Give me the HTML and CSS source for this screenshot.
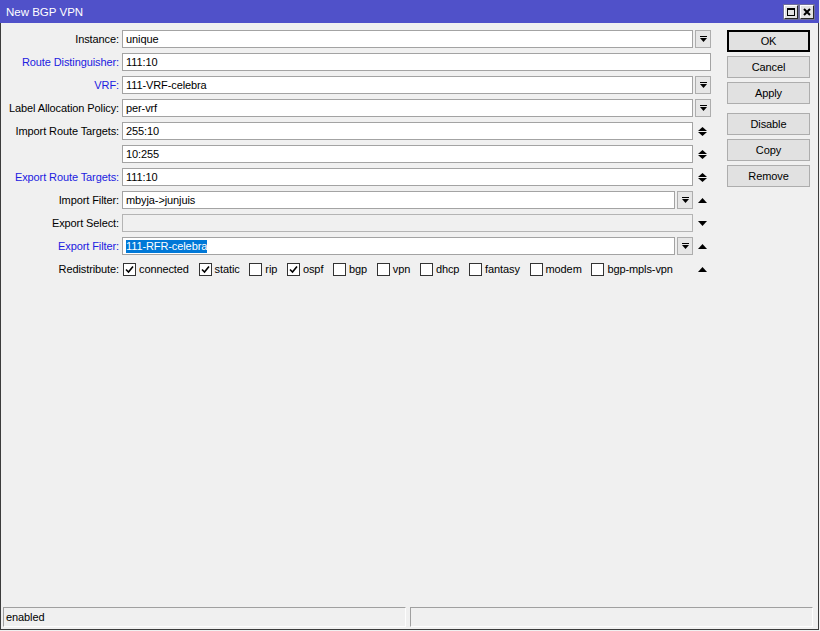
FILE: index.html
```html
<!DOCTYPE html>
<html>
<head>
<meta charset="utf-8">
<title>New BGP VPN</title>
<link rel="stylesheet" href="styles.css">
</head>
<body>
<div class="window">
  <div class="titlebar">
    <span class="title">New BGP VPN</span>
    <div class="tb-buttons">
      <span class="tb-btn"><svg width="8" height="8" viewBox="0 0 8 8"><rect x="0.5" y="0.5" width="7" height="7" fill="none" stroke="#000"/><rect x="0" y="0" width="8" height="2" fill="#000"/></svg></span>
      <span class="tb-btn"><svg width="8" height="8" viewBox="0 0 8 8"><path d="M1 1L7 7M7 1L1 7" stroke="#000" stroke-width="2"/></svg></span>
    </div>
  </div>
  <div class="content">
    <div class="form">
      <div class="row">
        <span class="lbl">Instance:</span>
        <div class="field">
          <span class="input">unique</span>
          <span class="dd"><svg width="7" height="6" viewBox="0 0 7 6"><rect x="0" y="0" width="7" height="1"/><path d="M0 2H7L3.5 6Z"/></svg></span>
        </div>
      </div>
      <div class="row">
        <span class="lbl blue">Route Distinguisher:</span>
        <div class="field">
          <span class="input">111:10</span>
        </div>
      </div>
      <div class="row">
        <span class="lbl blue">VRF:</span>
        <div class="field">
          <span class="input">111-VRF-celebra</span>
          <span class="dd"><svg width="7" height="6" viewBox="0 0 7 6"><rect x="0" y="0" width="7" height="1"/><path d="M0 2H7L3.5 6Z"/></svg></span>
        </div>
      </div>
      <div class="row">
        <span class="lbl">Label Allocation Policy:</span>
        <div class="field">
          <span class="input">per-vrf</span>
          <span class="dd"><svg width="7" height="6" viewBox="0 0 7 6"><rect x="0" y="0" width="7" height="1"/><path d="M0 2H7L3.5 6Z"/></svg></span>
        </div>
      </div>
      <div class="row">
        <span class="lbl">Import Route Targets:</span>
        <div class="field">
          <span class="input">255:10</span>
          <span class="arr"><svg width="9" height="9" viewBox="0 0 9 9"><path d="M4.5 0L9 4H0Z M0 5H9L4.5 9Z"/></svg></span>
        </div>
      </div>
      <div class="row">
        <span class="lbl"></span>
        <div class="field">
          <span class="input">10:255</span>
          <span class="arr"><svg width="9" height="9" viewBox="0 0 9 9"><path d="M4.5 0L9 4H0Z M0 5H9L4.5 9Z"/></svg></span>
        </div>
      </div>
      <div class="row">
        <span class="lbl blue">Export Route Targets:</span>
        <div class="field">
          <span class="input">111:10</span>
          <span class="arr"><svg width="9" height="9" viewBox="0 0 9 9"><path d="M4.5 0L9 4H0Z M0 5H9L4.5 9Z"/></svg></span>
        </div>
      </div>
      <div class="row">
        <span class="lbl">Import Filter:</span>
        <div class="field">
          <span class="input">mbyja-&gt;junjuis</span>
          <span class="dd"><svg width="7" height="6" viewBox="0 0 7 6"><rect x="0" y="0" width="7" height="1"/><path d="M0 2H7L3.5 6Z"/></svg></span>
          <span class="arr"><svg width="9" height="5" viewBox="0 0 9 5"><path d="M4.5 0L9 5H0Z"/></svg></span>
        </div>
      </div>
      <div class="row">
        <span class="lbl">Export Select:</span>
        <div class="field">
          <span class="input disabled"></span>
          <span class="arr"><svg width="9" height="5" viewBox="0 0 9 5"><path d="M0 0H9L4.5 5Z"/></svg></span>
        </div>
      </div>
      <div class="row">
        <span class="lbl blue">Export Filter:</span>
        <div class="field">
          <span class="input"><span class="sel">111-RFR-celebra</span></span>
          <span class="dd"><svg width="7" height="6" viewBox="0 0 7 6"><rect x="0" y="0" width="7" height="1"/><path d="M0 2H7L3.5 6Z"/></svg></span>
          <span class="arr"><svg width="9" height="5" viewBox="0 0 9 5"><path d="M4.5 0L9 5H0Z"/></svg></span>
        </div>
      </div>
      <div class="row">
        <span class="lbl">Redistribute:</span>
        <div class="field">
          <div class="checks">
            <span class="chk"><span class="box"><svg width="9" height="9" viewBox="0 0 9 9"><path d="M1 4.5L3.5 7L8 1.5" fill="none" stroke="#000" stroke-width="1.6"/></svg></span>connected</span>
            <span class="chk"><span class="box"><svg width="9" height="9" viewBox="0 0 9 9"><path d="M1 4.5L3.5 7L8 1.5" fill="none" stroke="#000" stroke-width="1.6"/></svg></span>static</span>
            <span class="chk"><span class="box"></span>rip</span>
            <span class="chk"><span class="box"><svg width="9" height="9" viewBox="0 0 9 9"><path d="M1 4.5L3.5 7L8 1.5" fill="none" stroke="#000" stroke-width="1.6"/></svg></span>ospf</span>
            <span class="chk"><span class="box"></span>bgp</span>
            <span class="chk"><span class="box"></span>vpn</span>
            <span class="chk"><span class="box"></span>dhcp</span>
            <span class="chk"><span class="box"></span>fantasy</span>
            <span class="chk"><span class="box"></span>modem</span>
            <span class="chk"><span class="box"></span>bgp-mpls-vpn</span>
          </div>
          <span class="arr"><svg width="9" height="5" viewBox="0 0 9 5"><path d="M4.5 0L9 5H0Z"/></svg></span>
        </div>
      </div>
    </div>
    <div class="buttons">
      <span class="btn default">OK</span>
      <span class="btn">Cancel</span>
      <span class="btn">Apply</span>
      <span class="btn sep">Disable</span>
      <span class="btn">Copy</span>
      <span class="btn">Remove</span>
    </div>
  </div>
  <div class="statusbar">
    <div class="panel">enabled</div>
    <div class="panel"></div>
  </div>
</div>
</body>
</html>
```
FILE: styles.css
```css
* { box-sizing: border-box; }
html, body {
  margin: 0;
  padding: 0;
  background: #f0f0f0;
}
body {
  font-family: "Liberation Sans", Arial, sans-serif;
  font-size: 11px;
  letter-spacing: -0.1px;
  color: #000;
}
.window {
  width: 819px;
  height: 630px;
  display: flex;
  flex-direction: column;
  border-left: 1px solid #3c3c3c;
  border-right: 1px solid #3c3c3c;
  border-bottom: 1px solid #3c3c3c;
  background: #f0f0f0;
}
.titlebar {
  height: 23px;
  background: #5051c9;
  display: flex;
  align-items: center;
  padding: 0 5px 0 6px;
  margin: 0 -1px;
}
.title {
  color: #fff;
  font-size: 11.5px;
  letter-spacing: 0;
  flex: 1;
}
.tb-buttons {
  display: flex;
  gap: 2px;
}
.tb-btn {
  width: 14px;
  height: 14px;
  background: #e3e3e3;
  border: 1px solid #2a2a2a;
  border-top-color: #ffffff;
  border-left-color: #ffffff;
  box-shadow: 0 0 0 1px #6f6f9a;
  display: flex;
  align-items: center;
  justify-content: center;
}
.content {
  display: flex;
  gap: 16px;
  padding: 7px 8px 0 3px;
  flex: 1;
}
.form {
  width: 707px;
  display: flex;
  flex-direction: column;
}
.row {
  display: flex;
  align-items: center;
  height: 18px;
  margin-bottom: 5px;
}
.lbl {
  width: 118px;
  flex: none;
  text-align: right;
  padding-right: 3px;
  white-space: nowrap;
}
.lbl.blue { color: #2020e0; }
.field {
  flex: 1;
  display: flex;
  align-items: center;
  height: 18px;
}
.input {
  flex: 1;
  height: 18px;
  background: #fff;
  border: 1px solid #a3a3a3;
  padding: 0 3px;
  line-height: 16px;
  white-space: nowrap;
  overflow: hidden;
}
.input.disabled {
  background: #f0f0f0;
  border-color: #b4b4b4;
}
.sel {
  background: #0078d7;
  color: #fff;
  display: inline-block;
  line-height: 13px;
}
.dd {
  width: 16px;
  height: 18px;
  margin-left: 2px;
  background: #e6e6e6;
  border: 1px solid #adadad;
  display: flex;
  align-items: center;
  justify-content: center;
  flex: none;
}
.arr {
  width: 18px;
  height: 18px;
  display: flex;
  align-items: center;
  justify-content: center;
  flex: none;
  padding-left: 1px;
}
.checks {
  flex: 1;
  display: flex;
  align-items: center;
  gap: 9.7px;
  padding-left: 1px;
}
.chk {
  display: flex;
  align-items: center;
  white-space: nowrap;
}
.box {
  width: 13px;
  height: 13px;
  background: #fff;
  border: 1px solid #333;
  margin-right: 3px;
  display: flex;
  align-items: center;
  justify-content: center;
}
.buttons {
  width: 83px;
  display: flex;
  flex-direction: column;
  gap: 4px;
}
.btn {
  height: 22px;
  background: #e1e1e1;
  border: 1px solid #adadad;
  display: flex;
  align-items: center;
  justify-content: center;
}
.btn.default {
  border: 2px solid #000;
}
.btn.sep {
  margin-top: 5px;
}
.statusbar {
  display: flex;
  gap: 4px;
  padding: 0 5px 2px 2px;
}
.panel {
  flex: 1;
  height: 20px;
  border-top: 1px solid #a0a0a0;
  border-left: 1px solid #a0a0a0;
  border-right: 1px solid #fdfdfd;
  border-bottom: 1px solid #fdfdfd;
  padding-left: 2px;
  line-height: 18px;
}
```
